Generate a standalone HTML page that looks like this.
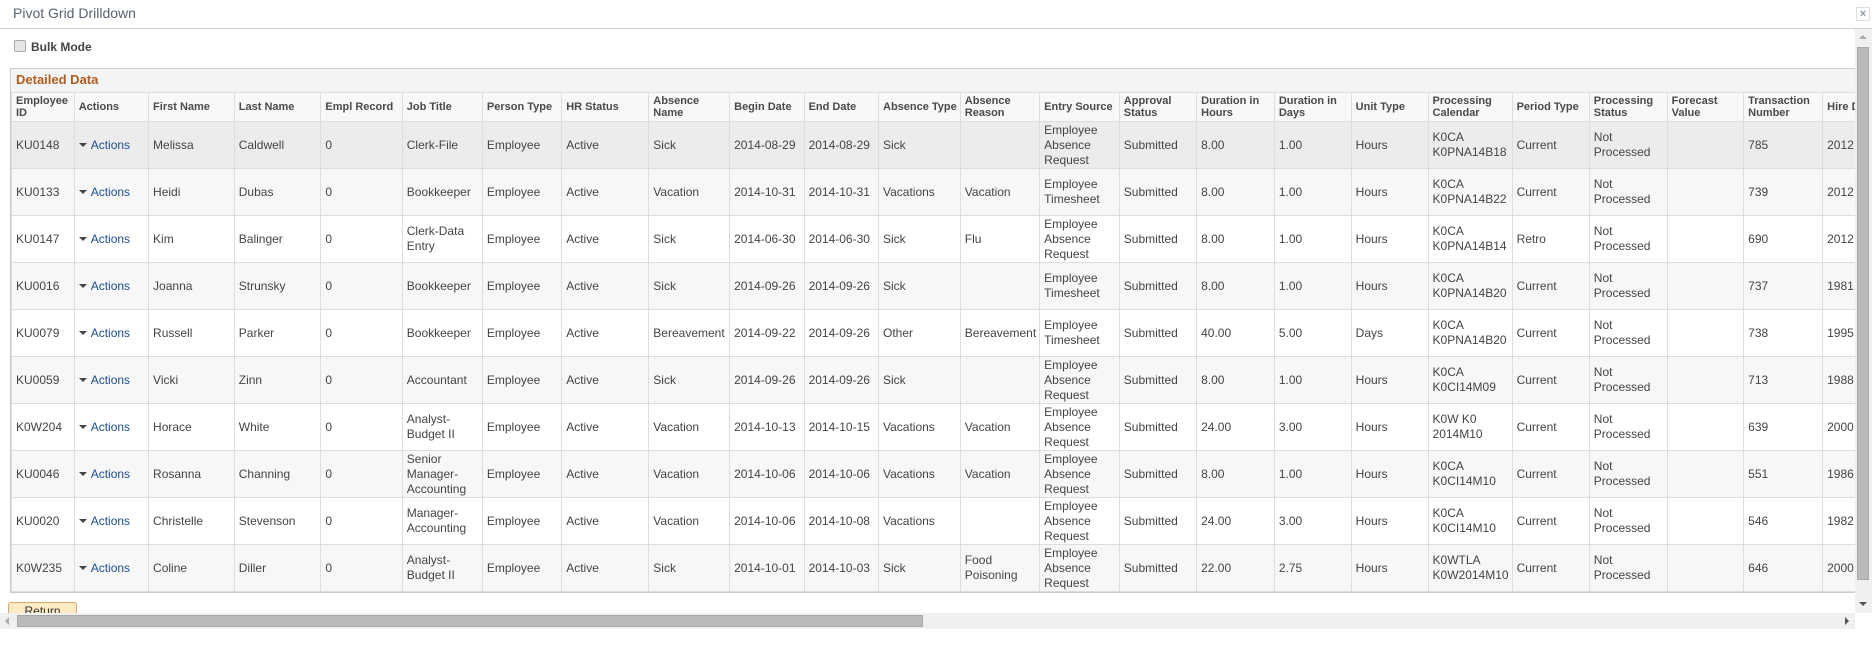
<!DOCTYPE html>
<html><head><meta charset="utf-8"><style>
*{box-sizing:border-box;margin:0;padding:0}
body{width:1872px;height:648px;overflow:hidden;background:#fff;font-family:"Liberation Sans",Arial,sans-serif;position:relative}
.title{position:absolute;left:13px;top:5px;font-size:14px;color:#5a6470}
.hr{position:absolute;left:0;top:28px;width:1872px;height:1px;background:#cfd3d7}
.close{position:absolute;left:1856px;top:7px;width:14px;height:14px;border:1px solid #ddd;color:#8a9aaa;font-size:11px;line-height:12px;text-align:center;font-weight:bold}
.bulk{position:absolute;left:14px;top:40px;font-size:12px;font-weight:bold;color:#444}
.cb{display:inline-block;width:12px;height:12px;border:1px solid #aaa;border-radius:2px;background:#e6e6e6;vertical-align:-1px;margin-right:5px}
.clip{position:absolute;left:0;top:29px;width:1855px;height:584px;overflow:hidden}
.box{position:absolute;left:10px;top:39px;width:1900px;height:525px;border:1px solid #c8ccd1;border-width:1px 0 2px 1px;background:#f2f4f5}
.box .cap{height:23px;padding:3px 0 0 5px;font-size:13px;font-weight:bold;color:#b35c1e}
table{border-collapse:collapse;table-layout:fixed;position:absolute;left:0;top:23px}
th,td{border:1px solid #ddd;text-align:left;vertical-align:middle;padding:0 3px 0 4px;overflow:hidden;white-space:nowrap}
th{height:29px;font-size:11px;color:#4a4a4a;background:#f8f8f8;line-height:12px}
td{height:47px;font-size:12px;color:#444;line-height:15px}
tr.r0 td{background:#ececec}
tr.e td{background:#f7f7f7}
tr.o td{background:#fff}
.a{color:#1e4e8c}
.a:before{content:"";display:inline-block;border:4px solid transparent;border-top:4px solid #444;border-bottom:0;margin-right:4px;vertical-align:2px}
.ret{position:absolute;left:8px;top:602px;width:69px;height:14px;border:1px solid #e0a66a;border-radius:3px;background:#fdebc4;font-size:12px;color:#333;text-align:center;padding-top:1px}
.hs{position:absolute;left:0;top:613px;width:1855px;height:16px;background:#f0f0f0}
.hs .t{position:absolute;left:17px;top:2px;width:906px;height:12px;background:#bababa;border:1px solid #a8a8a8}
.vs{position:absolute;left:1855px;top:29px;width:17px;height:584px;background:#f0f0f0}
.vs .t{position:absolute;left:2px;top:18px;width:12px;height:533px;background:#bababa;border:1px solid #a8a8a8}
.arr{position:absolute;width:0;height:0;border:4px solid transparent}
</style></head><body>
<div class="title">Pivot Grid Drilldown</div>
<div class="close">×</div>
<div class="hr"></div>
<div class="bulk"><span class="cb"></span>Bulk Mode</div>
<div class="clip">
<div class="box"><div class="cap">Detailed Data</div>
<table>
<colgroup><col style="width:63px"><col style="width:76px"><col style="width:88px"><col style="width:89px"><col style="width:82px"><col style="width:81px"><col style="width:80px"><col style="width:90px"><col style="width:81px"><col style="width:75px"><col style="width:75px"><col style="width:73px"><col style="width:75px"><col style="width:80px"><col style="width:79px"><col style="width:79px"><col style="width:78px"><col style="width:79px"><col style="width:81px"><col style="width:78px"><col style="width:79px"><col style="width:79px"><col style="width:80px"><col style="width:90px"></colgroup>
<tr><th>Employee<br>ID</th><th>Actions</th><th>First Name</th><th>Last Name</th><th>Empl Record</th><th>Job Title</th><th>Person Type</th><th>HR Status</th><th>Absence<br>Name</th><th>Begin Date</th><th>End Date</th><th>Absence Type</th><th>Absence<br>Reason</th><th>Entry Source</th><th>Approval<br>Status</th><th>Duration in<br>Hours</th><th>Duration in<br>Days</th><th>Unit Type</th><th>Processing<br>Calendar</th><th>Period Type</th><th>Processing<br>Status</th><th>Forecast<br>Value</th><th>Transaction<br>Number</th><th>Hire Date</th></tr>
<tr class="r0"><td>KU0148</td><td class="a">Actions</td><td>Melissa</td><td>Caldwell</td><td>0</td><td>Clerk-File</td><td>Employee</td><td>Active</td><td>Sick</td><td>2014-08-29</td><td>2014-08-29</td><td>Sick</td><td></td><td>Employee<br>Absence<br>Request</td><td>Submitted</td><td>8.00</td><td>1.00</td><td>Hours</td><td>K0CA<br>K0PNA14B18</td><td>Current</td><td>Not<br>Processed</td><td></td><td>785</td><td>2012</td></tr>
<tr class="e"><td>KU0133</td><td class="a">Actions</td><td>Heidi</td><td>Dubas</td><td>0</td><td>Bookkeeper</td><td>Employee</td><td>Active</td><td>Vacation</td><td>2014-10-31</td><td>2014-10-31</td><td>Vacations</td><td>Vacation</td><td>Employee<br>Timesheet</td><td>Submitted</td><td>8.00</td><td>1.00</td><td>Hours</td><td>K0CA<br>K0PNA14B22</td><td>Current</td><td>Not<br>Processed</td><td></td><td>739</td><td>2012</td></tr>
<tr class="o"><td>KU0147</td><td class="a">Actions</td><td>Kim</td><td>Balinger</td><td>0</td><td>Clerk-Data<br>Entry</td><td>Employee</td><td>Active</td><td>Sick</td><td>2014-06-30</td><td>2014-06-30</td><td>Sick</td><td>Flu</td><td>Employee<br>Absence<br>Request</td><td>Submitted</td><td>8.00</td><td>1.00</td><td>Hours</td><td>K0CA<br>K0PNA14B14</td><td>Retro</td><td>Not<br>Processed</td><td></td><td>690</td><td>2012</td></tr>
<tr class="e"><td>KU0016</td><td class="a">Actions</td><td>Joanna</td><td>Strunsky</td><td>0</td><td>Bookkeeper</td><td>Employee</td><td>Active</td><td>Sick</td><td>2014-09-26</td><td>2014-09-26</td><td>Sick</td><td></td><td>Employee<br>Timesheet</td><td>Submitted</td><td>8.00</td><td>1.00</td><td>Hours</td><td>K0CA<br>K0PNA14B20</td><td>Current</td><td>Not<br>Processed</td><td></td><td>737</td><td>1981</td></tr>
<tr class="o"><td>KU0079</td><td class="a">Actions</td><td>Russell</td><td>Parker</td><td>0</td><td>Bookkeeper</td><td>Employee</td><td>Active</td><td>Bereavement</td><td>2014-09-22</td><td>2014-09-26</td><td>Other</td><td>Bereavement</td><td>Employee<br>Timesheet</td><td>Submitted</td><td>40.00</td><td>5.00</td><td>Days</td><td>K0CA<br>K0PNA14B20</td><td>Current</td><td>Not<br>Processed</td><td></td><td>738</td><td>1995</td></tr>
<tr class="e"><td>KU0059</td><td class="a">Actions</td><td>Vicki</td><td>Zinn</td><td>0</td><td>Accountant</td><td>Employee</td><td>Active</td><td>Sick</td><td>2014-09-26</td><td>2014-09-26</td><td>Sick</td><td></td><td>Employee<br>Absence<br>Request</td><td>Submitted</td><td>8.00</td><td>1.00</td><td>Hours</td><td>K0CA<br>K0CI14M09</td><td>Current</td><td>Not<br>Processed</td><td></td><td>713</td><td>1988</td></tr>
<tr class="o"><td>K0W204</td><td class="a">Actions</td><td>Horace</td><td>White</td><td>0</td><td>Analyst-<br>Budget II</td><td>Employee</td><td>Active</td><td>Vacation</td><td>2014-10-13</td><td>2014-10-15</td><td>Vacations</td><td>Vacation</td><td>Employee<br>Absence<br>Request</td><td>Submitted</td><td>24.00</td><td>3.00</td><td>Hours</td><td>K0W K0<br>2014M10</td><td>Current</td><td>Not<br>Processed</td><td></td><td>639</td><td>2000</td></tr>
<tr class="e"><td>KU0046</td><td class="a">Actions</td><td>Rosanna</td><td>Channing</td><td>0</td><td>Senior<br>Manager-<br>Accounting</td><td>Employee</td><td>Active</td><td>Vacation</td><td>2014-10-06</td><td>2014-10-06</td><td>Vacations</td><td>Vacation</td><td>Employee<br>Absence<br>Request</td><td>Submitted</td><td>8.00</td><td>1.00</td><td>Hours</td><td>K0CA<br>K0CI14M10</td><td>Current</td><td>Not<br>Processed</td><td></td><td>551</td><td>1986</td></tr>
<tr class="o"><td>KU0020</td><td class="a">Actions</td><td>Christelle</td><td>Stevenson</td><td>0</td><td>Manager-<br>Accounting</td><td>Employee</td><td>Active</td><td>Vacation</td><td>2014-10-06</td><td>2014-10-08</td><td>Vacations</td><td></td><td>Employee<br>Absence<br>Request</td><td>Submitted</td><td>24.00</td><td>3.00</td><td>Hours</td><td>K0CA<br>K0CI14M10</td><td>Current</td><td>Not<br>Processed</td><td></td><td>546</td><td>1982</td></tr>
<tr class="e"><td>K0W235</td><td class="a">Actions</td><td>Coline</td><td>Diller</td><td>0</td><td>Analyst-<br>Budget II</td><td>Employee</td><td>Active</td><td>Sick</td><td>2014-10-01</td><td>2014-10-03</td><td>Sick</td><td>Food<br>Poisoning</td><td>Employee<br>Absence<br>Request</td><td>Submitted</td><td>22.00</td><td>2.75</td><td>Hours</td><td>K0WTLA<br>K0W2014M10</td><td>Current</td><td>Not<br>Processed</td><td></td><td>646</td><td>2000</td></tr>
</table></div>
<div class="ret" style="top:573px">Return</div>
</div>
<div class="hs"><div class="arr" style="left:5px;top:4px;border-right-color:#aaa;border-left:0"></div><div class="t"></div><div class="arr" style="left:1845px;top:4px;border-left-color:#555;border-right:0"></div></div>
<div class="vs"><div class="arr" style="left:4px;top:6px;border-bottom-color:#aaa;border-top:0"></div><div class="t"></div><div class="arr" style="left:4px;top:573px;border-top-color:#555;border-bottom:0"></div></div>
</body></html>
